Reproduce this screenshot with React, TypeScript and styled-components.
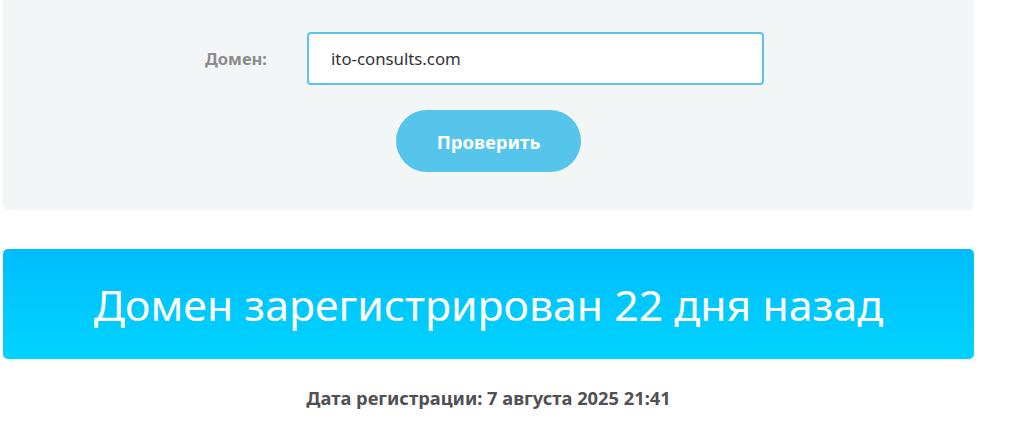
import { createGlobalStyle } from 'styled-components'
import styled from 'styled-components'

const GlobalStyle = createGlobalStyle`
  body {
    margin: 0;
    background: #ffffff;
    font-family: "Noto Sans", "Open Sans", sans-serif;
  }
`

const Page = styled.div`
  width: 971px;
  padding-left: 3px;
`

const Panel = styled.form`
  background: #f3f6f7;
  border-radius: 0 0 6px 6px;
  padding: 32px 0 38px;
  display: flex;
  flex-direction: column;
  align-items: center;
`

const Row = styled.div`
  align-self: stretch;
  display: grid;
  grid-template-columns: 264px 457px;
  column-gap: 40px;
  align-items: center;
`

const Label = styled.label`
  text-align: right;
  font-size: 16.5px;
  font-weight: 700;
  color: #8c8c8c;
`

const Input = styled.input`
  box-sizing: border-box;
  height: 53px;
  width: 100%;
  padding: 0 22px;
  border: 2px solid #5bc3ec;
  border-radius: 4px;
  background: #ffffff;
  font-family: "Noto Sans", sans-serif;
  font-size: 16.8px;
  color: #333;
  outline: none;
`

const Button = styled.button`
  margin-top: 25px;
  width: 185px;
  height: 62px;
  border: none;
  border-radius: 31px;
  background: #56c5ec;
  color: #ffffff;
  font-family: "Noto Sans", sans-serif;
  font-size: 18.5px;
  font-weight: 700;
  cursor: pointer;
`

const Banner = styled.div`
  margin-top: 39px;
  height: 110px;
  border-radius: 5px;
  background: linear-gradient(180deg, #00bdfd 0%, #00d3fe 100%);
  display: flex;
  align-items: center;
  justify-content: center;
  color: #ffffff;
  font-family: "Noto Sans", sans-serif;
  font-size: 42.8px;
  font-weight: 400;
`

const DateLine = styled.p`
  margin: 26px 0 0;
  text-align: center;
  font-size: 18.3px;
  font-weight: 700;
  color: #505055;
`

export default function App() {
  return (
    <Page>
      <GlobalStyle />
      <Panel onSubmit={(e) => e.preventDefault()}>
        <Row>
          <Label htmlFor="domain">Домен:</Label>
          <Input id="domain" defaultValue="ito-consults.com" />
        </Row>
        <Button type="submit">Проверить</Button>
      </Panel>
      <Banner>Домен зарегистрирован 22 дня назад</Banner>
      <DateLine>Дата регистрации: 7 августа 2025 21:41</DateLine>
    </Page>
  )
}
